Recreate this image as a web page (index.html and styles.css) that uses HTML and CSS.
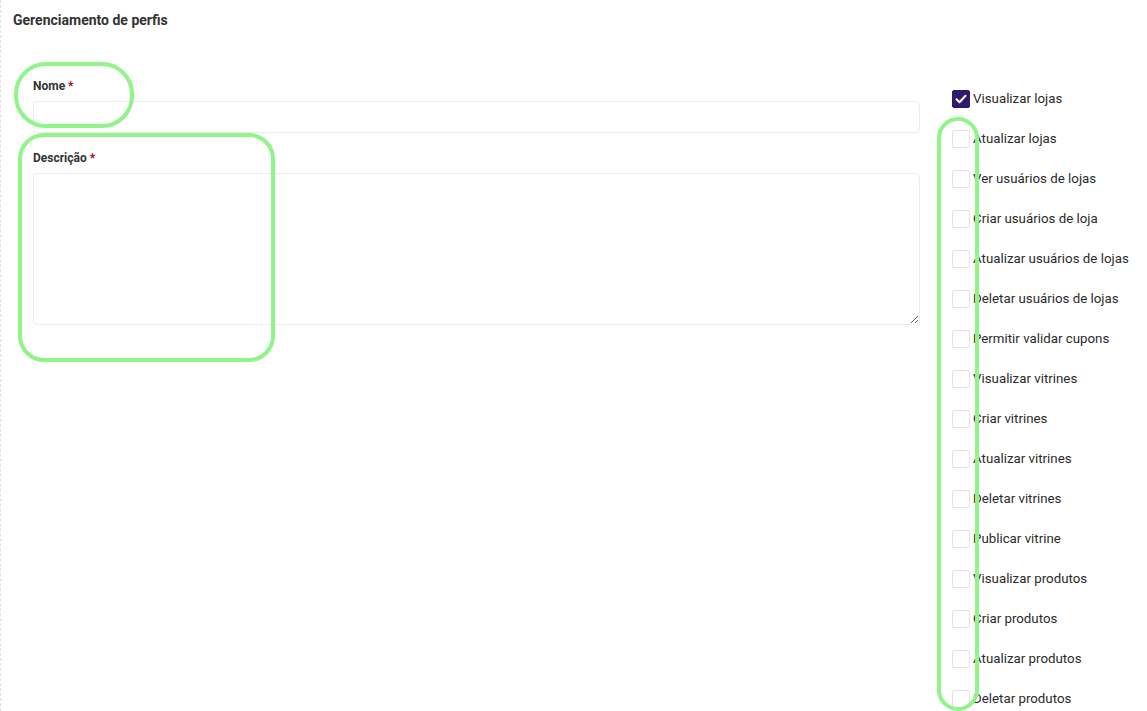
FILE: index.html
```html
<!DOCTYPE html>
<html lang="pt-BR">
<head>
<meta charset="utf-8">
<title>Gerenciamento de perfis</title>
<link rel="stylesheet" href="styles.css">
</head>
<body>
<div class="page">
  <h1 class="title">Gerenciamento de perfis</h1>
  <div class="content">
    <div class="form">
      <label class="field-label">Nome <span class="req">*</span></label>
      <input class="input" type="text">
      <label class="field-label field-label--gap">Descrição <span class="req">*</span></label>
      <textarea class="textarea"></textarea>
    </div>
    <ul class="perms">
      <li class="perm"><span class="box box--checked"><svg viewBox="0 0 18 18" width="18" height="18"><path d="M4.5 9.2l3 3 6-6.4" fill="none" stroke="#fff" stroke-width="2" stroke-linecap="round" stroke-linejoin="round"/></svg></span><span class="perm-label">Visualizar lojas</span></li>
      <li class="perm"><span class="box"></span><span class="perm-label">Atualizar lojas</span></li>
      <li class="perm"><span class="box"></span><span class="perm-label">Ver usuários de lojas</span></li>
      <li class="perm"><span class="box"></span><span class="perm-label">Criar usuários de loja</span></li>
      <li class="perm"><span class="box"></span><span class="perm-label">Atualizar usuários de lojas</span></li>
      <li class="perm"><span class="box"></span><span class="perm-label">Deletar usuários de lojas</span></li>
      <li class="perm"><span class="box"></span><span class="perm-label">Permitir validar cupons</span></li>
      <li class="perm"><span class="box"></span><span class="perm-label">Visualizar vitrines</span></li>
      <li class="perm"><span class="box"></span><span class="perm-label">Criar vitrines</span></li>
      <li class="perm"><span class="box"></span><span class="perm-label">Atualizar vitrines</span></li>
      <li class="perm"><span class="box"></span><span class="perm-label">Deletar vitrines</span></li>
      <li class="perm"><span class="box"></span><span class="perm-label">Publicar vitrine</span></li>
      <li class="perm"><span class="box"></span><span class="perm-label">Visualizar produtos</span></li>
      <li class="perm"><span class="box"></span><span class="perm-label">Criar produtos</span></li>
      <li class="perm"><span class="box"></span><span class="perm-label">Atualizar produtos</span></li>
      <li class="perm"><span class="box"></span><span class="perm-label">Deletar produtos</span></li>
    </ul>
  </div>
</div>
<div class="mark mark--nome"></div>
<div class="mark mark--desc"></div>
<div class="mark mark--boxes"></div>
</body>
</html>
```

FILE: styles.css
```css
html, body {
  margin: 0;
  height: 100%;
  overflow: hidden;
  background: #fff;
}
body {
  font-family: Roboto, "Liberation Sans", Arial, sans-serif;
  color: #333;
  border-left: 1px dashed #e2e2e2;
  box-sizing: border-box;
  position: relative;
}
.page {
  padding: 12px 0 0 12px;
}
.title {
  margin: 0;
  font-size: 14px;
  line-height: 16px;
  font-weight: 700;
  color: #333;
}
.content {
  display: flex;
  align-items: flex-start;
  margin-top: 50px;
}
.form {
  margin-left: 20px;
  width: 887px;
  display: flex;
  flex-direction: column;
}
.field-label {
  font-size: 12px;
  line-height: 16px;
  font-weight: 700;
  color: #333;
}
.field-label--gap {
  margin-top: 17px;
}
.req {
  color: #b00020;
}
.input, .textarea {
  box-sizing: border-box;
  width: 100%;
  border: 1px solid #ececec;
  border-radius: 4px;
  margin: 7px 0 0;
  background: #fff;
  font: inherit;
}
.input {
  height: 32px;
}
.textarea {
  height: 152px;
  resize: vertical;
  display: block;
}
.perms {
  list-style: none;
  margin: 1px 0 0 32px;
  padding: 0;
}
.perm {
  height: 40px;
  display: flex;
  align-items: center;
}
.box {
  box-sizing: border-box;
  width: 18px;
  height: 18px;
  border: 1px solid #e3e3e3;
  border-radius: 2px;
  background: #fff;
  flex: none;
  display: flex;
}
.box--checked {
  background: #2f1a70;
  border-color: #2f1a70;
}
.box--checked svg {
  margin: -1px;
}
.perm-label {
  margin-left: 3px;
  font-size: 13.3px;
  line-height: 16px;
  color: #2b2b2b;
  white-space: nowrap;
}
.mark {
  position: absolute;
  box-sizing: border-box;
  border: 4px solid #90f48a;
  pointer-events: none;
}
.mark--nome {
  left: 13px;
  top: 62px;
  width: 120px;
  height: 66px;
  border-radius: 32px;
}
.mark--desc {
  left: 17px;
  top: 133px;
  width: 257px;
  height: 229px;
  border-radius: 26px;
}
.mark--boxes {
  left: 936px;
  top: 117px;
  width: 42px;
  height: 594px;
  border-radius: 21px;
}
```
